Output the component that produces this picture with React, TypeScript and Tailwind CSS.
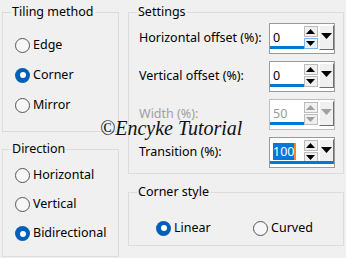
import React from "react";

const font = { fontFamily: '"Noto Sans", "Open Sans", sans-serif' };

function Radio({ label, checked, h = "h-[30px]" }: { label: string; checked?: boolean; h?: string }) {
  return (
    <div className={`flex items-center ${h}`}>
      {checked ? (
        <span className="w-[15px] h-[15px] rounded-full bg-[#005fb8] flex items-center justify-center">
          <span className="w-[6px] h-[6px] rounded-full bg-white" />
        </span>
      ) : (
        <span className="w-[15px] h-[15px] rounded-full border border-[#555] bg-[#f7f7f7]" />
      )}
      <span className="ml-[3px] text-black">{label}</span>
    </div>
  );
}

function Arrow({ up, color }: { up?: boolean; color: string }) {
  return (
    <svg width="9" height="5" viewBox="0 0 9 5">
      <path d={up ? "M0 5 L4.5 0 L9 5 Z" : "M0 0 L9 0 L4.5 5 Z"} fill={color} />
    </svg>
  );
}

function Spin({
  value,
  disabled,
  selected,
  hotDown,
}: {
  value: string;
  disabled?: boolean;
  selected?: boolean;
  hotDown?: boolean;
}) {
  const arrow = disabled ? "#a0a0a0" : "#000";
  return (
    <div
      className={`relative flex w-[66px] h-[31px] border bg-white ${
        disabled ? "border-[#bdbdbd]" : "border-[#9a9a9a]"
      }`}
    >
      <div className="w-[35px] pl-[3px] pt-[5px]">
        <div
          className={`h-[20px] border-b-[3px] ${selected ? "border-transparent" : "border-[#0078d4]"} -ml-[3px] pl-[3px] -mr-[2px]`}
        >
          {selected ? (
            <span className="inline-flex items-center h-[17px] bg-[#0078d7] text-white leading-[17px] border-r-[2px] border-[#f08a24]">
              {value}
            </span>
          ) : (
            <span className={disabled ? "text-[#9a9a9a]" : "text-black"}>{value}</span>
          )}
        </div>
      </div>
      <div className="flex flex-col gap-[1px] mt-[2px]">
        <div className="w-[14px] h-[11px] border border-[#bcbcbc] bg-[#f0f0f0] flex items-center justify-center">
          <Arrow up color={arrow} />
        </div>
        <div
          className={`w-[14px] h-[11px] border flex items-center justify-center ${
            hotDown ? "border-[#7eb4ea] bg-[#e5f1fb]" : "border-[#bcbcbc] bg-[#f0f0f0]"
          }`}
        >
          <Arrow color={arrow} />
        </div>
      </div>
      <div className="ml-[1px] mt-[1px] w-[16px] h-[25px] bg-[#f0f0f0] border-r border-b border-r-[#6e6e6e] border-b-[#6e6e6e] border-l border-t border-l-white border-t-white flex justify-center pt-[7px]">
        <svg width="11" height="6" viewBox="0 0 11 6">
          <path d="M0 0 L11 0 L5.5 6 Z" fill={arrow} />
        </svg>
      </div>
      {selected && <div className="absolute left-0 right-[1px] bottom-[3px] h-[3px] bg-[#0078d4]" />}
    </div>
  );
}

function Row({
  label,
  children,
  disabled,
}: {
  label: string;
  children: React.ReactNode;
  disabled?: boolean;
}) {
  return (
    <div className="flex items-center justify-between h-[31px]">
      <span className={disabled ? "text-[#a0a0a0]" : "text-black"}>{label}</span>
      {children}
    </div>
  );
}

export default function App() {
  return (
    <div
      className="relative w-[346px] h-[258px] bg-[#f0f0f0] text-[12.5px] overflow-hidden flex gap-[9px] pl-[2px] pt-[4px]"
      style={font}
    >
      {/* left column */}
      <div className="w-[117px] flex flex-col gap-[9px]">
        <fieldset className="h-[128px] border border-[#dcdcdc] pl-[8px] pr-2">
          <legend className="px-[1px] leading-[16px]">Tiling method</legend>
          <div className="pl-[4px] pt-[10px]">
            <Radio label="Edge" />
            <Radio label="Corner" checked />
            <Radio label="Mirror" />
          </div>
        </fieldset>
        <fieldset className="h-[116px] border border-[#dcdcdc] pl-[8px] pr-2">
          <legend className="px-[1px] leading-[16px]">Direction</legend>
          <div className="pl-[4px] pt-[4px]">
            <Radio label="Horizontal" h="h-[29px]" />
            <Radio label="Vertical" h="h-[29px]" />
            <Radio label="Bidirectional" h="h-[29px]" checked />
          </div>
        </fieldset>
      </div>

      {/* right column */}
      <div className="w-[216px] flex flex-col gap-[10px]">
        <fieldset className="h-[170px] border border-[#dcdcdc] pl-[8px] pr-[8px]">
          <legend className="px-[1px] leading-[16px]">Settings</legend>
          <div className="flex flex-col gap-[7px] pt-[3px] pl-[2px]">
            <Row label="Horizontal offset (%):">
              <Spin value="0" hotDown />
            </Row>
            <Row label="Vertical offset (%):">
              <Spin value="0" />
            </Row>
            <Row label="Width (%):" disabled>
              <Spin value="50" disabled />
            </Row>
            <Row label="Transition (%):">
              <Spin value="100" selected />
            </Row>
          </div>
        </fieldset>
        <fieldset className="h-[62px] border border-[#dcdcdc] pl-[8px]">
          <legend className="px-[1px] leading-[16px]">Corner style</legend>
          <div className="flex pl-[19px] pt-[13px]">
            <div className="w-[97px]">
              <Radio label="Linear" checked />
            </div>
            <Radio label="Curved" />
          </div>
        </fieldset>
      </div>

      {/* watermark */}
      <div
        className="absolute left-[100px] top-[113px] text-[20px] italic text-[#111]"
        style={{ fontFamily: '"Liberation Serif", "DejaVu Serif", serif' }}
      >
        ©Encyke Tutorial
      </div>
    </div>
  );
}
